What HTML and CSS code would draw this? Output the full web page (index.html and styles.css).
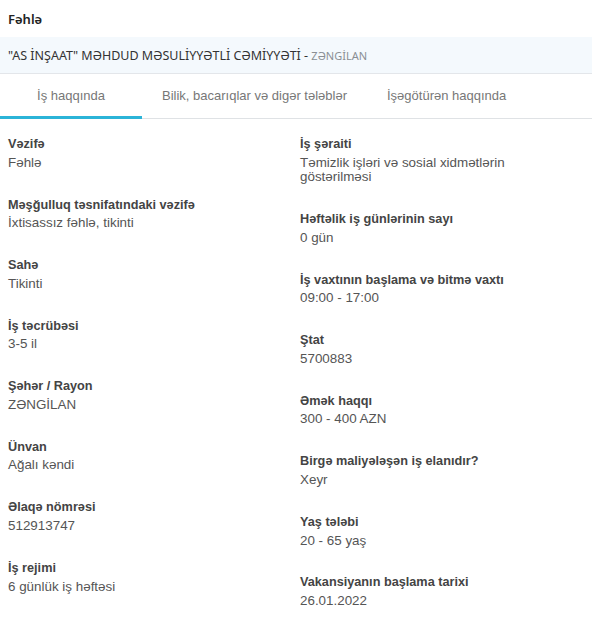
FILE: index.html
```html
<!DOCTYPE html>
<html lang="az">
<head>
  <meta charset="UTF-8" />
  <meta name="viewport" content="width=device-width, initial-scale=1.0" />
  <title>Fəhlə</title>
  <link rel="stylesheet" href="styles.css">
</head>
<body>
  <h1 class="title">Fəhlə</h1>
  <div class="company">"AS İNŞAAT" MƏHDUD MƏSULİYYƏTLİ CƏMİYYƏTİ - <span class="region">ZƏNGİLAN</span></div>

  <div class="tabs">
    <div class="tab active">İş haqqında</div>
    <div class="tab">Bilik, bacarıqlar və digər tələblər</div>
    <div class="tab">İşəgötürən haqqında</div>
  </div>

  <div class="details">
    <div class="col">
      <div class="item"><div class="label">Vəzifə</div><div class="value">Fəhlə</div></div>
      <div class="item"><div class="label">Məşğulluq təsnifatındaki vəzifə</div><div class="value">İxtisassız fəhlə, tikinti</div></div>
      <div class="item"><div class="label">Sahə</div><div class="value">Tikinti</div></div>
      <div class="item"><div class="label">İş təcrübəsi</div><div class="value">3-5 il</div></div>
      <div class="item"><div class="label">Şəhər / Rayon</div><div class="value">ZƏNGİLAN</div></div>
      <div class="item"><div class="label">Ünvan</div><div class="value">Ağalı kəndi</div></div>
      <div class="item"><div class="label">Əlaqə nömrəsi</div><div class="value">512913747</div></div>
      <div class="item"><div class="label">İş rejimi</div><div class="value">6 günlük iş həftəsi</div></div>
    </div>
    <div class="col">
      <div class="item"><div class="label">İş şəraiti</div><div class="value">Təmizlik işləri və sosial xidmətlərin göstərilməsi</div></div>
      <div class="item"><div class="label">Həftəlik iş günlərinin sayı</div><div class="value">0 gün</div></div>
      <div class="item"><div class="label">İş vaxtının başlama və bitmə vaxtı</div><div class="value">09:00 - 17:00</div></div>
      <div class="item"><div class="label">Ştat</div><div class="value">5700883</div></div>
      <div class="item"><div class="label">Əmək haqqı</div><div class="value">300 - 400 AZN</div></div>
      <div class="item"><div class="label">Birgə maliyələşən iş elanıdır?</div><div class="value">Xeyr</div></div>
      <div class="item"><div class="label">Yaş tələbi</div><div class="value">20 - 65 yaş</div></div>
      <div class="item"><div class="label">Vakansiyanın başlama tarixi</div><div class="value">26.01.2022</div></div>
    </div>
  </div>
</body>
</html>
```

FILE: styles.css
```css
body {
  margin: 0;
  font-family: "Liberation Sans", Arial, sans-serif;
  background: #fff;
  color: #444;
}
.title {
  margin: 0;
  padding: 9px 8px 8px;
  font-family: "Noto Sans", sans-serif;
  font-size: 13px;
  font-weight: 600;
  line-height: 20px;
  color: #222;
}
.company {
  background: #f4f9fd;
  border-bottom: 1px solid #e3e6ea;
  padding: 10px 8px 9px;
  font-family: "Noto Sans", sans-serif;
  font-size: 12.5px;
  line-height: 17px;
  color: #333;
}
.region {
  font-size: 11px;
  color: #8a8f94;
}
.tabs {
  display: flex;
  border-bottom: 1px solid #dfe2e5;
}
.tab {
  padding: 13px 20px 11px;
  font-size: 13px;
  line-height: 18px;
  color: #777;
  text-align: center;
  border-bottom: 3px solid transparent;
  margin-bottom: -1px;
}
.tab.active {
  width: 142px;
  padding-left: 0;
  padding-right: 0;
  border-bottom-color: #2bb4d8;
}
.details {
  display: grid;
  grid-template-columns: 1fr 1fr;
  gap: 8px;
  padding: 17px 8px 0;
}
.item {
  margin-bottom: 26.3px;
}
.label {
  font-size: 12.7px;
  font-weight: bold;
  line-height: 16px;
  color: #444;
  margin-bottom: 3.75px;
}
.value {
  max-width: 250px;
  font-size: 13.4px;
  line-height: 14.5px;
  color: #555;
}
```
